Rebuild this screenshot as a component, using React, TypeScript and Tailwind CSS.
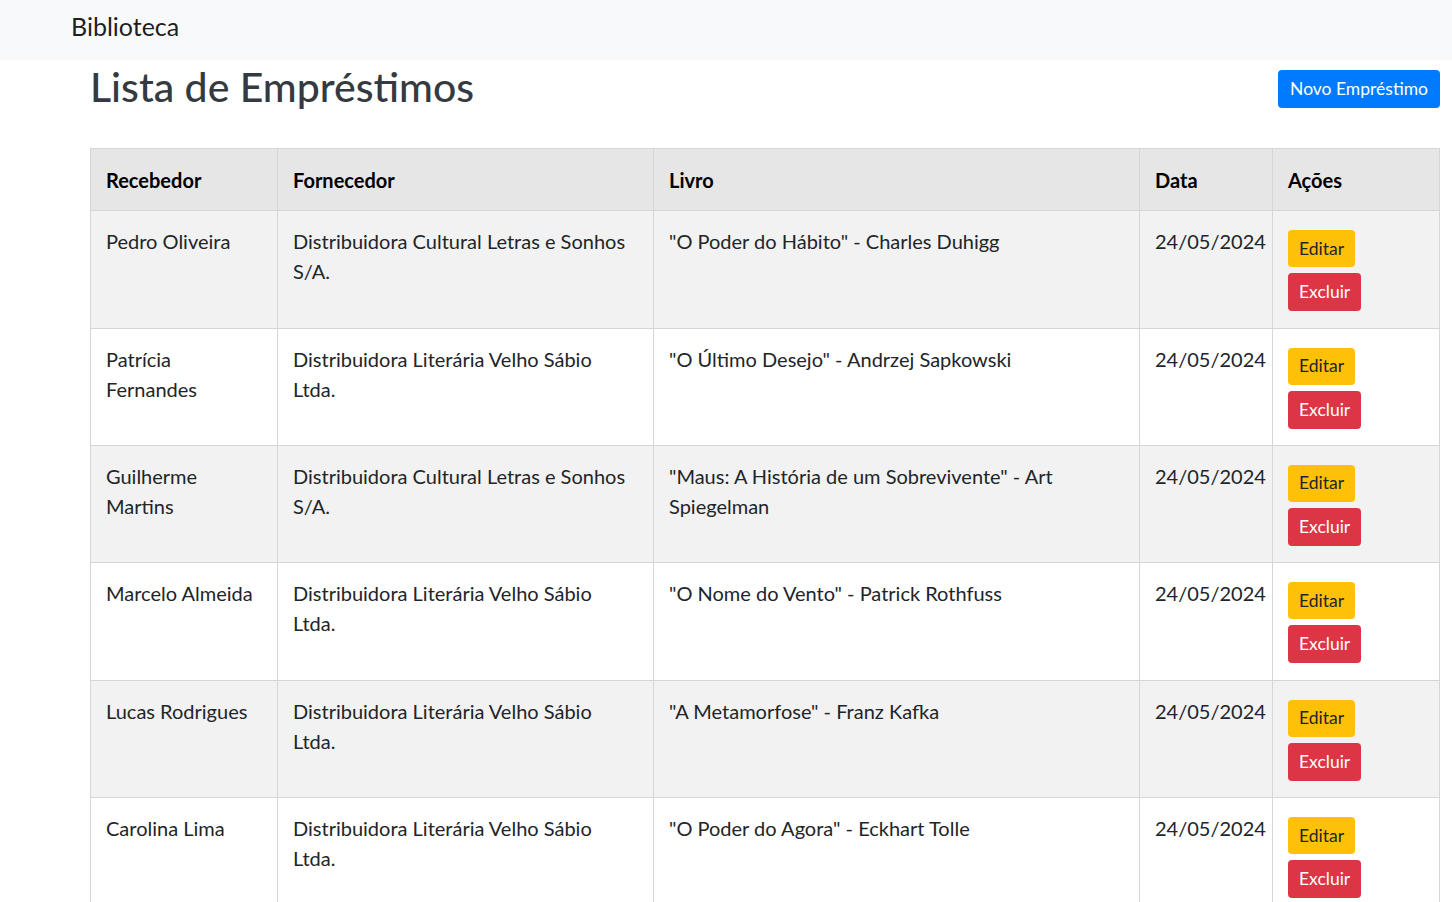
const rows = [
  {
    recebedor: 'Pedro Oliveira',
    fornecedor: 'Distribuidora Cultural Letras e Sonhos S/A.',
    livro: '"O Poder do Hábito" - Charles Duhigg',
    data: '24/05/2024',
  },
  {
    recebedor: 'Patrícia Fernandes',
    fornecedor: 'Distribuidora Literária Velho Sábio Ltda.',
    livro: '"O Último Desejo" - Andrzej Sapkowski',
    data: '24/05/2024',
  },
  {
    recebedor: 'Guilherme Martins',
    fornecedor: 'Distribuidora Cultural Letras e Sonhos S/A.',
    livro: '"Maus: A História de um Sobrevivente" - Art Spiegelman',
    data: '24/05/2024',
  },
  {
    recebedor: 'Marcelo Almeida',
    fornecedor: 'Distribuidora Literária Velho Sábio Ltda.',
    livro: '"O Nome do Vento" - Patrick Rothfuss',
    data: '24/05/2024',
  },
  {
    recebedor: 'Lucas Rodrigues',
    fornecedor: 'Distribuidora Literária Velho Sábio Ltda.',
    livro: '"A Metamorfose" - Franz Kafka',
    data: '24/05/2024',
  },
  {
    recebedor: 'Carolina Lima',
    fornecedor: 'Distribuidora Literária Velho Sábio Ltda.',
    livro: '"O Poder do Agora" - Eckhart Tolle',
    data: '24/05/2024',
  },
];

const font = "font-['Segoe_UI','Lato','Noto_Sans',sans-serif]";
const cell = 'border border-[#d6d6d6] px-[15px] py-[15px] align-top';

export default function App() {
  return (
    <div className={`${font} min-h-screen bg-white text-[#212529]`}>
      <nav className="flex h-[60px] items-center bg-[#f8f9fa] pb-[7px] pl-[71px]">
        <a href="#" className="text-[25px] leading-none text-black/90">
          Biblioteca
        </a>
      </nav>

      <main className="pl-[90px] pr-[12px]">
        <div className="flex items-start justify-between">
          <h2 className="pt-[2px] text-[41px] font-medium leading-[1.2] text-[#343a40]">
            Lista de Empréstimos
          </h2>
          <button className="mt-[10px] h-[38px] rounded-[4px] bg-[#007bff] px-[12px] text-[17.5px] text-white">
            Novo Empréstimo
          </button>
        </div>

        <table className="mt-[37px] w-[1349px] table-fixed border-collapse border border-[#d6d6d6] text-[20px] leading-[30px]">
          <colgroup>
            <col className="w-[187px]" />
            <col className="w-[376px]" />
            <col className="w-[486px]" />
            <col className="w-[133px]" />
            <col className="w-[167px]" />
          </colgroup>
          <thead>
            <tr className="bg-[#e6e6e6] text-left text-black">
              {['Recebedor', 'Fornecedor', 'Livro', 'Data', 'Ações'].map((h) => (
                <th
                  key={h}
                  className="border border-[#d6d6d6] px-[15px] pt-[16px] pb-[15px] align-top font-bold"
                >
                  {h}
                </th>
              ))}
            </tr>
          </thead>
          <tbody>
            {rows.map((r, i) => (
              <tr key={i} className={i % 2 === 0 ? 'bg-[#f2f2f2]' : 'bg-white'}>
                <td className={cell}>{r.recebedor}</td>
                <td className={cell}>{r.fornecedor}</td>
                <td className={cell}>{r.livro}</td>
                <td className={cell}>{r.data}</td>
                <td className={cell}>
                  <div className="mt-[4px] flex h-[82.4px] flex-col items-start gap-[6px]">
                    <button className="h-[37px] shrink-0 rounded-[4px] bg-[#ffc107] px-[11px] text-[17.5px] text-[#212529]">
                      Editar
                    </button>
                    <button className="h-[38px] shrink-0 rounded-[4px] bg-[#dc3545] px-[11px] text-[17.5px] text-white">
                      Excluir
                    </button>
                  </div>
                </td>
              </tr>
            ))}
          </tbody>
        </table>
      </main>
    </div>
  );
}
